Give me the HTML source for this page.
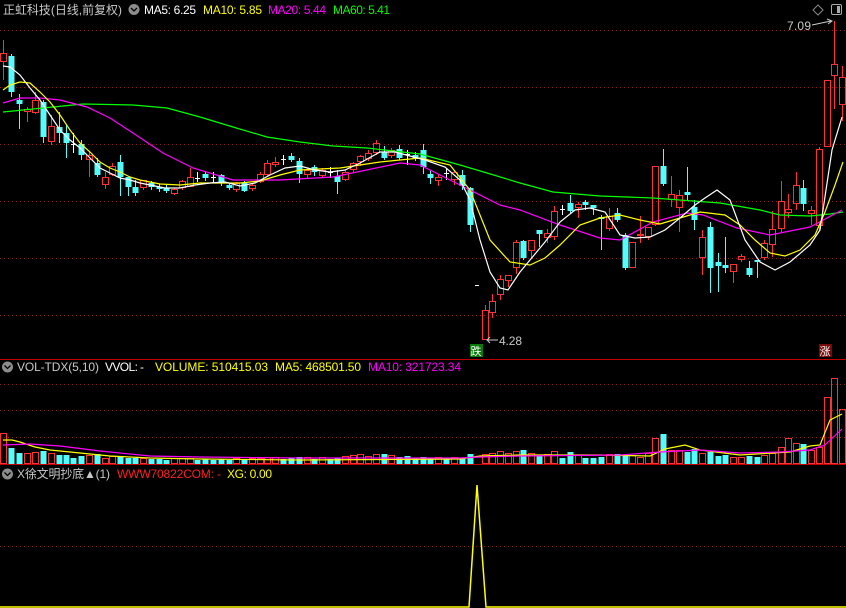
<!DOCTYPE html>
<html><head><meta charset="utf-8">
<style>
html,body{margin:0;padding:0;background:#000;width:846px;height:608px;overflow:hidden}
svg{display:block}
text{font-family:"Liberation Sans","Noto Sans CJK SC",sans-serif;font-size:12px}
</style></head><body>
<svg id="s" width="846" height="608" viewBox="0 0 846 608" xmlns="http://www.w3.org/2000/svg">
<g stroke="#8a1a1a" stroke-dasharray="1,3" stroke-width="1">
<line x1="0" y1="30.5" x2="846" y2="30.5"/><line x1="0" y1="87.5" x2="846" y2="87.5"/>
<line x1="0" y1="144.5" x2="846" y2="144.5"/><line x1="0" y1="201.5" x2="846" y2="201.5"/>
<line x1="0" y1="258.5" x2="846" y2="258.5"/><line x1="0" y1="315.5" x2="846" y2="315.5"/>
<line x1="0" y1="384.5" x2="846" y2="384.5"/><line x1="0" y1="410.5" x2="846" y2="410.5"/>
<line x1="0" y1="437.5" x2="846" y2="437.5"/><line x1="0" y1="546.5" x2="846" y2="546.5"/>
</g>
<line x1="0" y1="359.5" x2="846" y2="359.5" stroke="#c00000"/>
<line x1="0" y1="464.5" x2="846" y2="464.5" stroke="#c00000"/>
<g id="cd"></g>
<g fill="none" stroke-width="1.2">
<polyline stroke="#00ff00" points="3,112 83,104 133,105 167,108 200,117 233,127 267,137 300,142 333,146 367,148 420,154 460,165 487,173 520,183 553,192 600,196 653,198 720,203 760,210 780,215 810,216 830,214 843,212"/>
<polyline stroke="#ff00ff" points="3,103 20,98 40,98 60,100 87,107 110,118 133,133 163,153 193,168 233,180 280,180 333,177 400,163 420,165 460,185 500,205 520,210 560,225 600,238 620,240 653,222 687,213 703,215 737,228 770,235 810,227 842,210"/>
<polyline stroke="#ffff00" points="3,90 10,85 20,82 30,83 40,92 50,102 60,115 70,130 80,143 90,152 100,162 110,168 120,172 130,177 140,180 160,184 180,185 200,183 220,183 240,183 260,181 280,175 300,170 320,169 340,168 360,165 380,162 400,160 420,158 450,165 470,190 490,240 510,262 530,265 545,258 560,245 580,225 600,218 620,215 640,220 660,224 680,218 700,212 725,215 740,225 755,240 770,253 785,256 800,250 815,235 825,212 835,185 843,162"/>
<polyline stroke="#ffffff" points="3,66 10,67 20,75 30,88 40,100 50,115 60,130 70,140 80,148 90,158 100,168 110,173 120,178 130,180 140,183 150,185 165,188 180,188 195,185 210,183 225,182 240,186 255,183 270,175 285,168 300,166 315,170 330,172 345,170 360,163 380,152 395,152 410,156 425,160 445,167 460,180 470,200 480,240 490,272 500,288 508,290 520,272 530,260 545,242 560,222 575,210 590,208 605,212 620,235 635,238 650,237 665,230 680,218 695,205 705,198 717,190 730,200 745,240 760,262 775,270 790,262 810,245 820,230 832,150 842,117"/>
</g>
<g id="vb"></g>
<g fill="none" stroke-width="1.2">
<polyline stroke="#ffff00" points="3,440 12,440 20,442 35,447 50,450 80,453 110,456 150,458 200,459 300,460 460,459 480,456 520,455 600,455 650,456 665,449 685,445 700,450 740,455 790,452 810,446 820,445 830,420 842,414"/>
<polyline stroke="#ff00ff" points="3,445 30,444 60,446 100,451 150,456 200,457 300,458 460,458 480,457 520,456 620,455 660,452 700,450 740,453 780,452 810,450 825,445 842,429"/>
</g>
<polyline fill="none" stroke="#ffff00" stroke-width="1.5" points="0,607 469,607 477,485 486,607 846,607"/>
<line x1="475" y1="285.5" x2="479" y2="285.5" stroke="#fff"/>
<!-- headers -->
<text x="3" y="14" fill="#c8c8c8" textLength="119" lengthAdjust="spacingAndGlyphs">正虹科技(日线,前复权)</text>
<circle cx="134" cy="9.5" r="5.5" fill="#8c8c8c"/><path d="M131,8 L134,11 L137,8" stroke="#000" fill="none" stroke-width="1.3"/>
<text x="144" y="14" fill="#ffffff" textLength="52">MA5: 6.25</text>
<text x="203" y="14" fill="#ffff00" textLength="59">MA10: 5.85</text>
<text x="268" y="14" fill="#ff00ff" textLength="58">MA20: 5.44</text>
<text x="333" y="14" fill="#00ff00" textLength="57">MA60: 5.41</text>
<path d="M818,5 L823,10 L818,15 L813,10 Z" stroke="#888" fill="none"/>
<rect x="831.5" y="4.5" width="10" height="10" rx="1.5" stroke="#aaa" fill="none"/><rect x="837" y="6" width="3" height="7" fill="#aaa"/>
<text x="787" y="30" fill="#c8c8c8" textLength="24">7.09</text>
<path d="M812,25 L831,21 M827,19 L832,21 L828,24" stroke="#ccc" fill="none"/>
<path d="M498,340 L487,340 M490,337 L487,340 L490,343" stroke="#ccc" fill="none"/>
<text x="499" y="345" fill="#c8c8c8" textLength="23">4.28</text>
<rect x="470" y="344" width="13" height="13" fill="#0a7a0a"/>
<text x="470.5" y="355" fill="#fff" style="font-size:11px">跌</text>
<rect x="819" y="344" width="13" height="13" fill="#7a0a0a"/>
<text x="819.5" y="355" fill="#fff" style="font-size:11px">涨</text>
<circle cx="7.5" cy="367" r="5.5" fill="#8c8c8c"/><path d="M4.5,365.5 L7.5,368.5 L10.5,365.5" stroke="#000" fill="none" stroke-width="1.3"/>
<text x="17" y="371" fill="#c8c8c8" textLength="82">VOL-TDX(5,10)</text>
<text x="105" y="371" fill="#ffffff" textLength="39">VVOL: -</text>
<text x="155" y="371" fill="#ffff00" textLength="113">VOLUME: 510415.03</text>
<text x="275" y="371" fill="#ffff00" textLength="86">MA5: 468501.50</text>
<text x="368" y="371" fill="#ff00ff" textLength="93">MA10: 321723.34</text>
<circle cx="7.5" cy="474" r="5.5" fill="#8c8c8c"/><path d="M4.5,472.5 L7.5,475.5 L10.5,472.5" stroke="#000" fill="none" stroke-width="1.3"/>
<text x="17" y="478" fill="#c8c8c8" textLength="93">X徐文明抄底▲(1)</text>
<text x="117" y="478" fill="#ff2020" textLength="104">WWW70822COM: -</text>
<text x="227" y="478" fill="#ffff00" textLength="45">XG: 0.00</text>
</svg>
<script>
var D="3,53,62,40,80,r,30|11,56,92,54,97,c,16|19,100,104,94,129,c,11|27,109,112,107,122,r,10|35,100,113,92,114,r,11|43,102,137,100,143,c,13|51,126,142,115,145,r,10|59,127,133,112,143,c,9|66,133,143,125,158,c,9|73,144,146,133,153,w,6|81,144,155,140,160,c,8|89,155,160,152,177,r,8|97,163,175,158,177,c,10|105,177,185,172,189,r,5|112,166,175,163,176,r,7|120,162,177,155,196,c,8|128,177,187,177,196,c,6|135,187,193,180,196,c,6|143,180,188,180,190,r,5|151,183,187,181,190,c,5|159,187,189,184,192,c,5|166,188,191,185,193,c,4|174,189,194,188,195,r,5|182,181,188,180,190,r,5|190,177,187,168,187,r,5|197,178,179,172,182,w,4|205,174,178,172,181,c,5|213,177,178,172,183,w,4|221,175,183,174,186,c,5|229,185,188,184,190,c,4|236,183,190,182,192,r,5|244,183,191,181,192,c,5|252,185,189,184,191,r,5|260,174,182,172,183,r,5|267,163,175,160,176,r,6|275,162,165,157,167,r,6|283,159,160,155,165,w,5|291,156,160,153,162,c,6|299,161,174,158,183,c,7|307,170,175,168,178,r,6|314,167,172,165,176,c,5|322,170,176,168,178,r,6|330,172,173,167,178,w,5|337,176,182,170,194,c,6|345,172,180,170,181,r,7|353,163,170,162,173,r,8|360,156,162,155,166,r,9|368,153,159,150,161,r,7|376,143,153,140,155,r,9|384,152,158,146,160,c,10|391,150,156,148,158,r,8|399,149,158,145,160,c,7|407,154,156,150,165,w,8|415,155,158,152,161,c,6|423,150,167,144,174,c,7|430,174,178,170,184,c,6|438,177,181,175,186,r,6|446,173,175,168,180,w,6|454,172,180,170,185,r,6|462,175,186,170,190,c,6|470,188,225,187,232,c,10|485,310,340,305,340,r,9|492,301,313,294,318,r,10|500,279,295,275,300,r,12|508,275,281,275,287,r,10|516,242,268,240,274,r,12|523,241,258,240,260,c,14|531,240,251,240,258,r,10|539,230,234,230,247,c,8|547,233,238,229,243,r,9|554,211,237,206,240,r,12|562,209,211,205,215,w,6|570,203,211,195,213,c,12|578,204,208,202,218,r,8|585,202,205,200,210,c,6|593,205,208,205,215,c,6|601,217,219,215,250,c,7|609,216,229,208,231,r,9|617,213,220,208,222,c,10|625,235,268,233,270,c,9|632,242,268,242,268,r,8|640,234,236,216,243,r,6|648,227,237,227,240,r,10|655,166,225,166,226,r,25|663,166,184,149,186,c,30|671,194,200,176,207,r,13|679,195,208,190,232,r,13|687,192,195,167,201,c,12|694,207,220,200,230,c,15|702,237,258,230,275,r,10|710,227,268,222,293,c,12|718,262,266,253,292,c,8|725,265,268,237,273,c,9|733,264,272,264,283,r,6|741,256,260,254,262,r,6|749,268,275,261,277,c,8|757,260,262,260,278,c,7|764,243,258,240,260,r,8|772,229,245,211,257,r,10|781,201,229,181,232,r,16|788,209,213,194,218,r,25|796,185,204,172,210,r,20|803,188,204,180,211,c,20|811,210,214,206,225,r,13|819,149,226,147,230,r,16|827,80,147,80,147,r,66|834,64,76,21,109,r,85|842,77,105,66,121,r,54";
var cd="",vb="",R="#ff3232",C="#54fcfc";
D.split("|").forEach(function(s){var a=s.split(",");var x=+a[0],t=+a[1],b=+a[2],wt=+a[3],wb=+a[4],k=a[5],v=+a[6];
var col=k=="r"?R:(k=="c"?C:"#fff");
if(k=="w"){cd+='<line x1="'+(x+.5)+'" y1="'+wt+'" x2="'+(x+.5)+'" y2="'+wb+'" stroke="#fff"/><line x1="'+(x-2)+'" y1="'+(t+.5)+'" x2="'+(x+3)+'" y2="'+(t+.5)+'" stroke="#fff"/>';}
else if(k=="r"){cd+='<line x1="'+(x+.5)+'" y1="'+wt+'" x2="'+(x+.5)+'" y2="'+t+'" stroke="'+R+'"/><line x1="'+(x+.5)+'" y1="'+b+'" x2="'+(x+.5)+'" y2="'+wb+'" stroke="'+R+'"/><rect x="'+(x-2.5)+'" y="'+(t+.5)+'" width="6" height="'+Math.max(b-t-1,1)+'" fill="none" stroke="'+R+'"/>';}
else{cd+='<line x1="'+(x+.5)+'" y1="'+wt+'" x2="'+(x+.5)+'" y2="'+wb+'" stroke="'+C+'"/><rect x="'+(x-2.5)+'" y="'+t+'" width="6" height="'+Math.max(b-t,1)+'" fill="'+C+'"/>';}
if(k=="r")vb+='<rect x="'+(x-2.5)+'" y="'+(463.5-v)+'" width="6" height="'+v+'" fill="none" stroke="'+R+'"/>';
else vb+='<rect x="'+(x-2.5)+'" y="'+(464-v)+'" width="6" height="'+v+'" fill="'+C+'"/>';
});
document.getElementById("cd").innerHTML=cd;document.getElementById("vb").innerHTML=vb;
</script>
</body></html>
